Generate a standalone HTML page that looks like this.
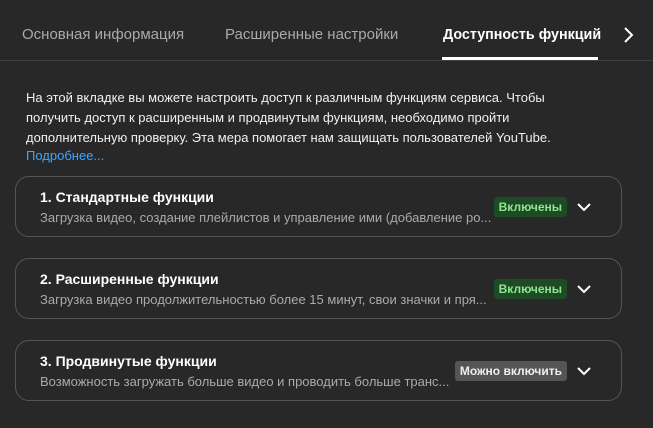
<!DOCTYPE html>
<html><head><meta charset="utf-8"><style>
*{margin:0;padding:0;box-sizing:border-box}
body{width:653px;height:428px;background:#282828;font-family:"Liberation Sans",Arial,sans-serif;color:#fff;position:relative;overflow:hidden}
.tab{position:absolute;top:26px;font-size:15px;color:#aaa;white-space:nowrap}
.tab.a{color:#fff;font-weight:bold;font-size:14.3px;top:27px}
.ul{position:absolute;left:442px;top:57px;width:156px;height:3px;background:#fff}
.div{position:absolute;left:0;top:60px;width:653px;height:1px;background:#3e3e3e}
.p{position:absolute;left:26px;top:88px;width:540px;font-size:13px;line-height:20px;color:#f1f1f1}
.p a{color:#3ea6ff;text-decoration:none;display:block;line-height:16px}
.card{position:absolute;left:15px;width:607px;height:61px;border:1px solid #555;border-radius:14px}
.t{position:absolute;left:24px;top:12px;font-size:14px;font-weight:bold;white-space:nowrap}
.s{position:absolute;left:24px;top:33px;font-size:13px;color:#aaa;white-space:nowrap}
.b{position:absolute;top:20px;right:54px;height:20px;line-height:20px;padding:0 5px;border-radius:3px;font-size:12px;font-weight:bold}
.g{background:#1e4a25;color:#8ee68f}
.m{background:#555;color:#eee}
.ch{position:absolute;right:29px;top:24px}
</style></head><body>
<div class="tab" style="left:22px">Основная информация</div>
<div class="tab" style="left:225px">Расширенные настройки</div>
<div class="tab a" style="left:443px">Доступность функций</div>
<svg style="position:absolute;left:621px;top:26px" width="14" height="18" viewBox="0 0 14 18"><path d="M4 2l7 7-7 7" stroke="#fff" stroke-width="2" fill="none"/></svg>
<div class="ul"></div><div class="div"></div>
<div class="p">На этой вкладке вы можете настроить доступ к различным функциям сервиса. Чтобы получить доступ к расширенным и продвинутым функциям, необходимо пройти дополнительную проверку. Эта мера помогает нам защищать пользователей YouTube.<a>Подробнее...</a></div>
<div class="card" style="top:176px"><div class="t">1. Стандартные функции</div><div class="s">Загрузка видео, создание плейлистов и управление ими (добавление ро...</div><div class="b g">Включены</div><svg class="ch" width="16" height="12" viewBox="0 0 16 12"><path d="M2 3l6 6 6-6" stroke="#fff" stroke-width="2" fill="none"/></svg></div>
<div class="card" style="top:258px"><div class="t">2. Расширенные функции</div><div class="s">Загрузка видео продолжительностью более 15 минут, свои значки и пря...</div><div class="b g">Включены</div><svg class="ch" width="16" height="12" viewBox="0 0 16 12"><path d="M2 3l6 6 6-6" stroke="#fff" stroke-width="2" fill="none"/></svg></div>
<div class="card" style="top:340px"><div class="t">3. Продвинутые функции</div><div class="s">Возможность загружать больше видео и проводить больше транс...</div><div class="b m">Можно включить</div><svg class="ch" width="16" height="12" viewBox="0 0 16 12"><path d="M2 3l6 6 6-6" stroke="#fff" stroke-width="2" fill="none"/></svg></div>
</body></html>
